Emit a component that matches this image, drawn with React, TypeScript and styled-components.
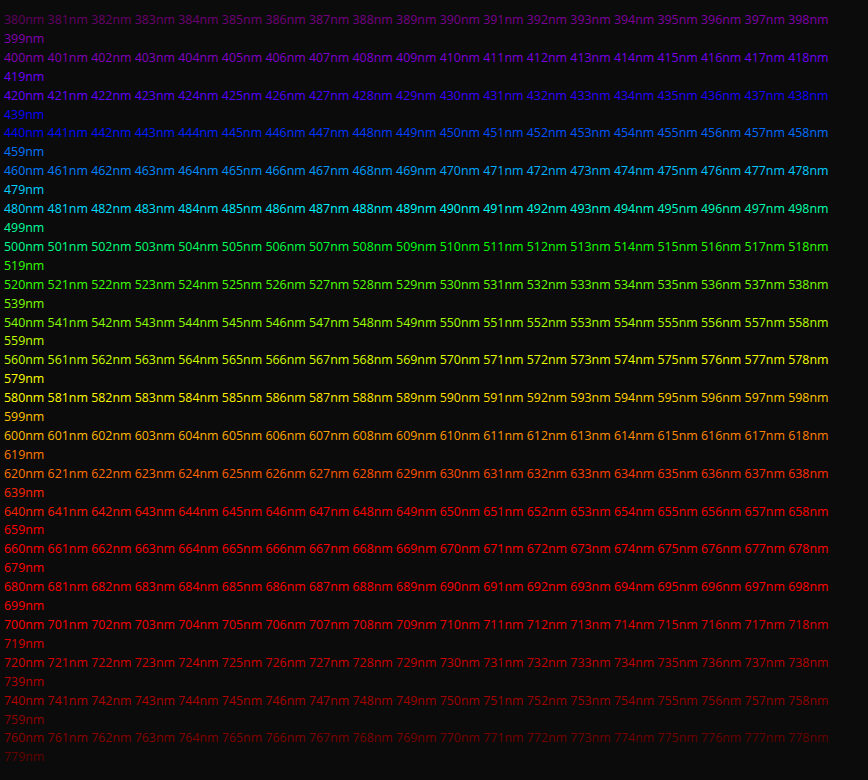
import React from "react"
import styled, { createGlobalStyle } from "styled-components"

const Global = createGlobalStyle`
  html, body { margin: 0; background: #0b0b0b; }
  body { font-family: "Open Sans", "Noto Sans", sans-serif; }
`

const Page = styled.div`
  padding: 11px 4px 0 4px;
  width: 860px;
  font-size: 12.4px;
  line-height: 18.9px;
`

const Group = styled.div``

const Label = styled.span<{ $c: string }>`
  color: ${(p) => p.$c};
`

function wavelengthColor(w: number): string {
    let r = 0, g = 0, b = 0
    if (w < 440) { r = -(w - 440) / 60; b = 1 }
    else if (w < 490) { g = (w - 440) / 50; b = 1 }
    else if (w < 510) { g = 1; b = -(w - 510) / 20 }
    else if (w < 580) { r = (w - 510) / 70; g = 1 }
    else if (w < 645) { r = 1; g = -(w - 645) / 65 }
    else { r = 1 }
    let f = 1
    if (w < 420) f = 0.3 + 0.7 * (w - 380) / 40
    else if (w > 700) f = 0.3 + 0.7 * (780 - w) / 80
    const c = (v: number) => (v === 0 ? 0 : Math.round(255 * Math.pow(v * f, 0.8)))
    return `rgb(${c(r)}, ${c(g)}, ${c(b)})`
}

const groups = Array.from({ length: 20 }, (_, i) => 380 + i * 20)

export default function App() {
    return (
        <Page>
            <Global />
            {groups.map((start) => (
                <Group key={start}>
                    {Array.from({ length: 20 }, (_, j) => {
                        const w = start + j
                        return (
                            <React.Fragment key={w}>
                                <Label $c={wavelengthColor(w)}>{w}nm</Label>{" "}
                            </React.Fragment>
                        )
                    })}
                </Group>
            ))}
        </Page>
    )
}
